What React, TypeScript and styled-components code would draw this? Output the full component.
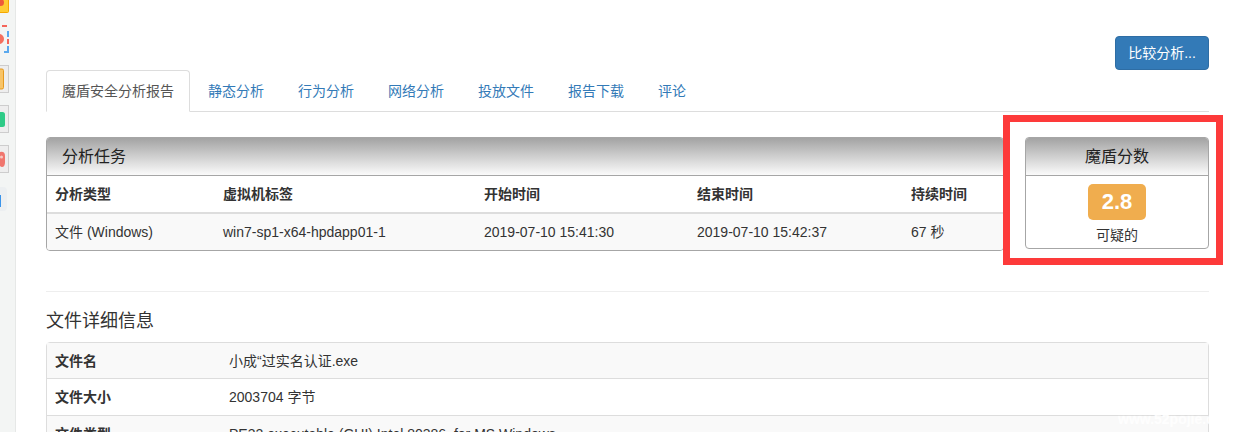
import styled, { createGlobalStyle } from 'styled-components';

const GlobalStyle = createGlobalStyle`
  html, body {
    margin: 0;
    padding: 0;
    background: #fff;
    overflow: hidden;
  }
  body {
    font-family: "Liberation Sans", "Noto Sans CJK SC", sans-serif;
    font-size: 14px;
    line-height: 20px;
    color: #333;
  }
`;

const Page = styled.div`
  position: relative;
  display: flex;
  width: 1237px;
  height: 432px;
  overflow: hidden;
`;

const Sidebar = styled.div`
  flex: none;
  width: 15px;
  height: 432px;
  background: #f3f5f4;
  border-right: 1px solid #e6e8e7;
  display: flex;
  flex-direction: column;
  gap: 12px;
  overflow: hidden;
`;

const SideTile = styled.div<{ $h: number; $kind?: 'framed' | 'soft' | 'bare' }>`
  flex: none;
  width: ${p => (p.$kind === 'soft' ? '7px' : '9px')};
  height: ${p => p.$h}px;
  margin-top: ${p => (p.$kind === 'soft' ? '2px' : '0')};
  box-sizing: border-box;
  background: ${p => (p.$kind === 'framed' ? '#eeeeee' : p.$kind === 'soft' ? '#eceff1' : 'transparent')};
  border: ${p => (p.$kind === 'framed' ? '1px solid #cdcdcd' : '0')};
  border-left: 0;
  border-radius: ${p => (p.$kind === 'soft' ? '0 4px 4px 0' : '0')};
  overflow: hidden;

  svg {
    display: block;
  }
`;

const Main = styled.main`
  flex: none;
  width: 1163px;
  margin-left: 30px;
  padding-top: 36px;
`;

const TopBar = styled.div`
  display: flex;
  justify-content: flex-end;
`;

const CompareButton = styled.button`
  width: 94px;
  height: 34px;
  padding: 0;
  font: inherit;
  color: #fff;
  background: #337ab7;
  border: 1px solid #2e6da4;
  border-radius: 4px;
`;

const Tabs = styled.ul`
  display: flex;
  margin: 0 0 25px;
  padding: 0;
  list-style: none;
  height: 41px;
  box-sizing: content-box;
  border-bottom: 1px solid #ddd;
`;

const Tab = styled.li<{ $active?: boolean }>`
  height: 42px;
  box-sizing: border-box;
  padding: 10px 15px;
  margin-right: 2px;
  color: ${p => (p.$active ? '#555' : '#337ab7')};
  background: ${p => (p.$active ? '#fff' : 'transparent')};
  border: 1px solid ${p => (p.$active ? '#ddd' : 'transparent')};
  border-bottom-color: ${p => (p.$active ? '#fff' : 'transparent')};
  border-radius: 4px 4px 0 0;
`;

const TopRow = styled.div`
  display: flex;
  justify-content: space-between;
  align-items: flex-start;
`;

const Panel = styled.section`
  box-sizing: border-box;
  border: 1px solid #a6a6a6;
  border-radius: 4px;
  overflow: hidden;
  background: #fff;
`;

const TaskPanel = styled(Panel)`
  width: 958px;
  height: 114px;
`;

const ScorePanel = styled(Panel)`
  width: 184px;
  height: 112px;
  text-align: center;
`;

const PanelHeading = styled.div<{ $center?: boolean }>`
  height: 38px;
  box-sizing: border-box;
  padding: ${p => (p.$center ? '8px 0' : '8px 15px')};
  font-size: 16px;
  line-height: 22px;
  color: #222;
  text-align: ${p => (p.$center ? 'center' : 'left')};
  background: linear-gradient(to bottom, #a3a3a3, #fbfbfb);
  border-bottom: 1px solid #a6a6a6;
`;

const TaskRow = styled.div<{ $head?: boolean }>`
  display: grid;
  grid-template-columns: 168px 261px 213px 214px 1fr;
  height: ${p => (p.$head ? '36px' : '36px')};
  align-items: center;
  background: ${p => (p.$head ? '#fff' : '#f9f9f9')};
  border-bottom: ${p => (p.$head ? '2px solid #ddd' : '0')};
  font-weight: ${p => (p.$head ? 700 : 400)};
`;

const TaskCell = styled.div`
  padding-left: 8px;
`;

const ScoreBody = styled.div`
  display: flex;
  flex-direction: column;
  align-items: center;
  padding-top: 8px;
`;

const ScoreBadge = styled.div`
  width: 58px;
  height: 36px;
  font-size: 22px;
  font-weight: 700;
  line-height: 36px;
  color: #fff;
  background: #f0ad4e;
  border-radius: 5px;
`;

const ScoreLabel = styled.div`
  margin-top: 5px;
  font-size: 14px;
  line-height: 20px;
`;

const Divider = styled.hr`
  margin: 40px 0 19px;
  border: 0;
  border-top: 1px solid #eee;
`;

const SectionTitle = styled.h4`
  margin: 0 0 11px;
  font-size: 18px;
  font-weight: 400;
  line-height: 20px;
`;

const DetailTable = styled.div`
  border: 1px solid #ddd;
  border-radius: 4px;
`;

const DetailRow = styled.div<{ $odd?: boolean }>`
  display: grid;
  grid-template-columns: 182px 1fr;
  height: 37px;
  align-items: center;
  background: ${p => (p.$odd ? '#f9f9f9' : '#fff')};
  border-top: 1px solid #ddd;
  box-sizing: border-box;

  &:first-child {
    height: 35px;
    border-top: 0;
  }
`;

const DetailKey = styled.div`
  padding-left: 8px;
  font-weight: 700;
`;

const DetailValue = styled.div``;

const RedFrame = styled.div`
  position: absolute;
  left: 1003px;
  top: 115px;
  width: 220px;
  height: 150px;
  box-sizing: border-box;
  border: 7px solid #fd3a3a;
`;

const Watermark = styled.div`
  position: absolute;
  left: 1118px;
  top: 409px;
  font-size: 14px;
  font-weight: 700;
  color: #fff;
  opacity: 0.9;
  text-shadow: 0 0 2px rgba(255, 255, 255, 0.7);
`;

const tabs = ['魔盾安全分析报告', '静态分析', '行为分析', '网络分析', '投放文件', '报告下载', '评论'];
const taskHead = ['分析类型', '虚拟机标签', '开始时间', '结束时间', '持续时间'];
const taskRow = ['文件 (Windows)', 'win7-sp1-x64-hpdapp01-1', '2019-07-10 15:41:30', '2019-07-10 15:42:37', '67 秒'];
const details = [
  ['文件名', '小成“过实名认证.exe'],
  ['文件大小', '2003704 字节'],
  ['文件类型', 'PE32 executable (GUI) Intel 80386, for MS Windows'],
];

export default function App() {
  return (
    <Page>
      <GlobalStyle />
      <Sidebar>
        <SideTile $h={13}>
          <svg width="9" height="13" viewBox="0 0 9 13">
            <rect x="-3" y="-3" width="11.5" height="15.5" rx="1" fill="#ffcc33" stroke="#f5a800" />
            <circle cx="0.5" cy="2.5" r="3.5" fill="#ee5a3a" />
          </svg>
        </SideTile>
        <SideTile $h={28} $kind="bare">
          <svg width="9" height="28" viewBox="0 0 9 28">
            <path d="M2 1h5" stroke="#f4655a" strokeWidth="2" />
            <path d="M8 6v6" stroke="#5aa9ee" strokeWidth="2" />
            <path d="M8 14v5" stroke="#f4655a" strokeWidth="2" />
            <path d="M8 21v6h-4" stroke="#5aa9ee" strokeWidth="2" fill="none" />
            <circle cx="-1" cy="14" r="5" fill="#f4705f" />
          </svg>
        </SideTile>
        <SideTile $h={28} $kind="framed">
          <svg width="8" height="26" viewBox="0 0 8 26">
            <rect x="-4" y="3" width="7.5" height="20" rx="1.5" fill="#f8c467" stroke="#e59a1f" />
          </svg>
        </SideTile>
        <SideTile $h={28} $kind="framed">
          <svg width="8" height="26" viewBox="0 0 8 26">
            <rect x="-4" y="6" width="9" height="15" rx="2.5" fill="#2ecb87" />
          </svg>
        </SideTile>
        <SideTile $h={28} $kind="framed">
          <svg width="8" height="26" viewBox="0 0 8 26">
            <path d="M0 6q5-1 5 4v6q0 5-3 5-1 0-2-1z" fill="#f0766e" />
            <circle cx="1.5" cy="11" r="1.5" fill="#f8c9c2" />
          </svg>
        </SideTile>
        <SideTile $h={24} $kind="soft">
          <svg width="7" height="24" viewBox="0 0 7 24">
            <rect x="-3" y="8" width="4" height="12" fill="#3a94ea" />
          </svg>
        </SideTile>
      </Sidebar>
      <Main>
        <TopBar>
          <CompareButton>比较分析...</CompareButton>
        </TopBar>
        <Tabs>
          {tabs.map((t, i) => (
            <Tab key={t} $active={i === 0}>{t}</Tab>
          ))}
        </Tabs>
        <TopRow>
          <TaskPanel>
            <PanelHeading>分析任务</PanelHeading>
            <TaskRow $head>
              {taskHead.map(c => <TaskCell key={c}>{c}</TaskCell>)}
            </TaskRow>
            <TaskRow>
              {taskRow.map(c => <TaskCell key={c}>{c}</TaskCell>)}
            </TaskRow>
          </TaskPanel>
          <ScorePanel>
            <PanelHeading $center>魔盾分数</PanelHeading>
            <ScoreBody>
              <ScoreBadge>2.8</ScoreBadge>
              <ScoreLabel>可疑的</ScoreLabel>
            </ScoreBody>
          </ScorePanel>
        </TopRow>
        <Divider />
        <SectionTitle>文件详细信息</SectionTitle>
        <DetailTable>
          {details.map(([k, v], i) => (
            <DetailRow key={k} $odd={i % 2 === 0}>
              <DetailKey>{k}</DetailKey>
              <DetailValue>{v}</DetailValue>
            </DetailRow>
          ))}
        </DetailTable>
      </Main>
      <RedFrame />
      <Watermark>www.52pojie.cn</Watermark>
    </Page>
  );
}
